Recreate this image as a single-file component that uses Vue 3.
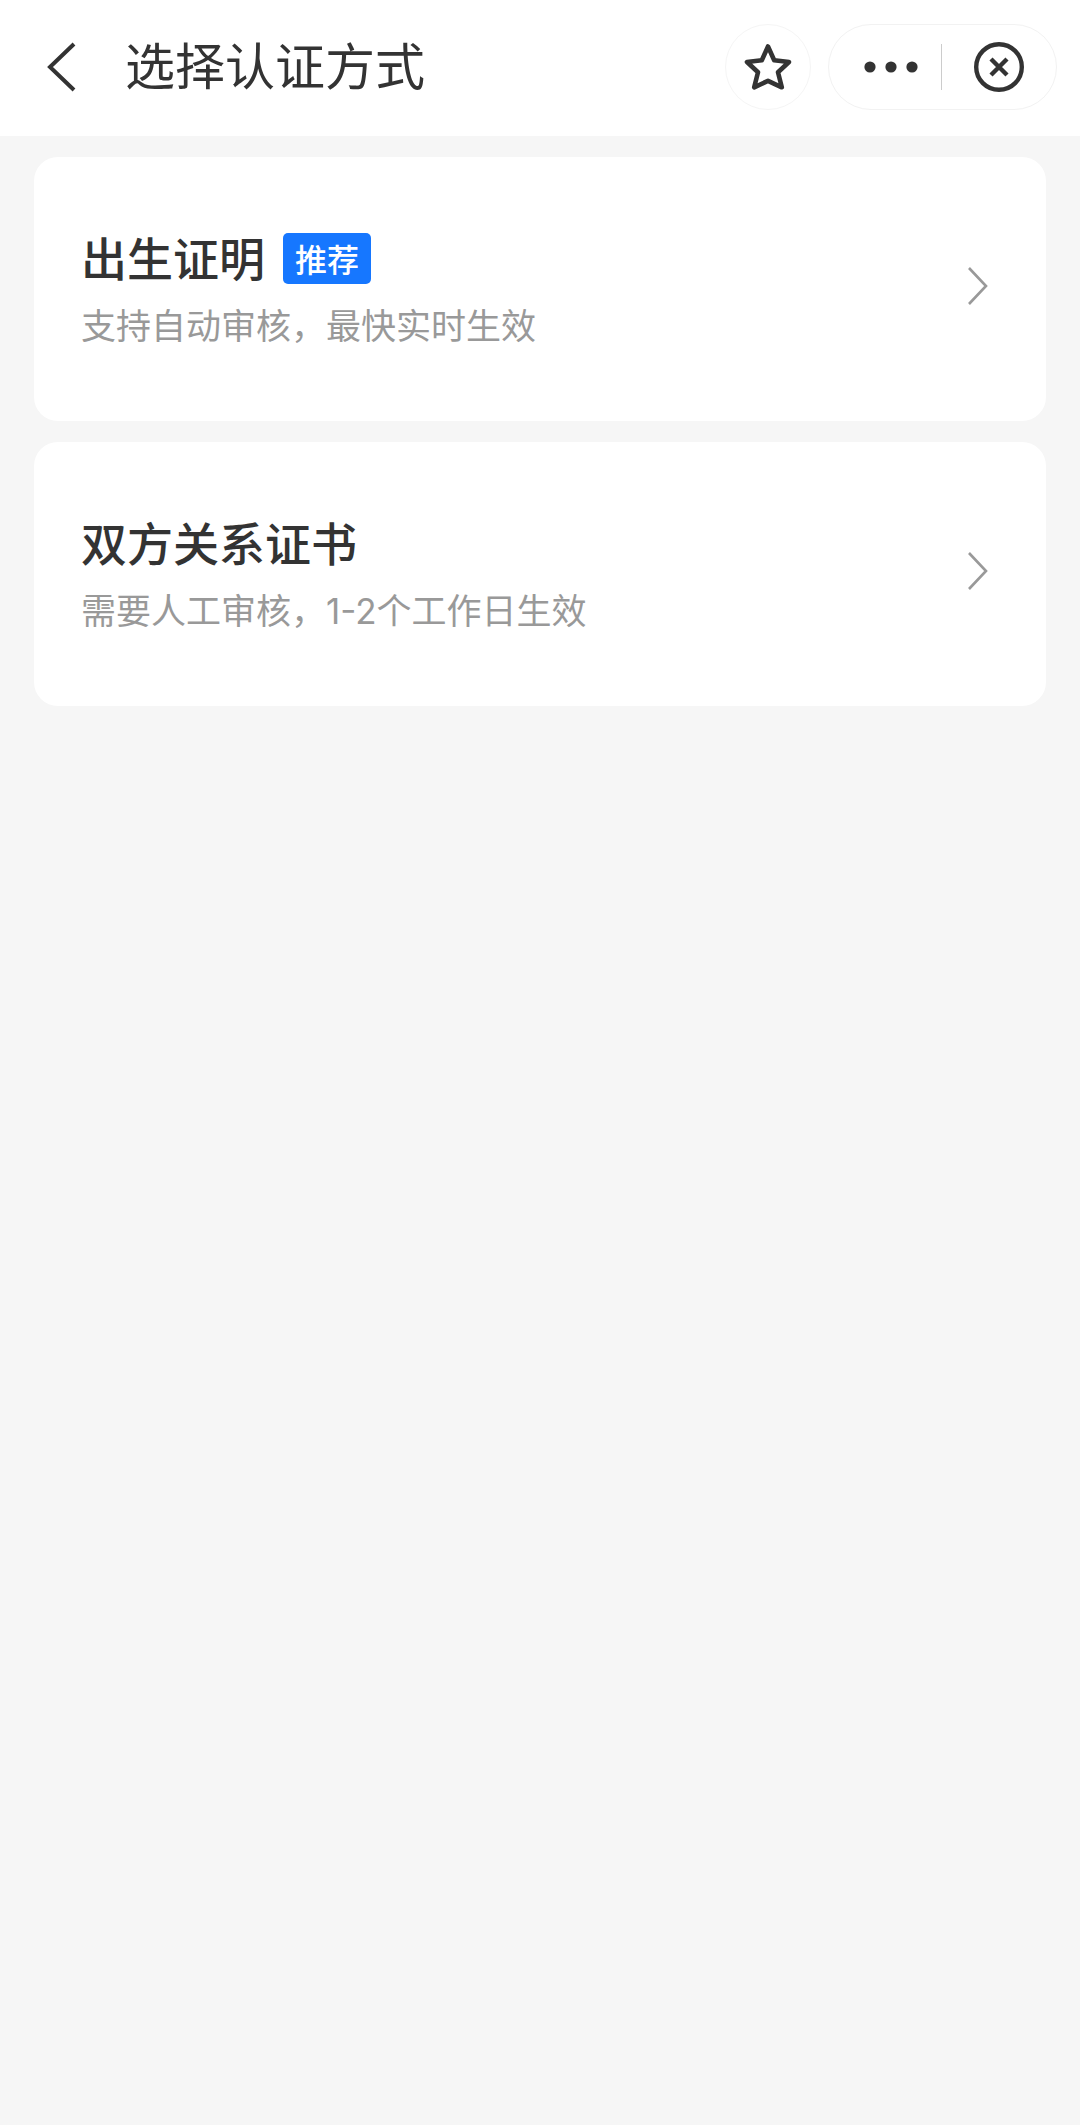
<script setup>
const methods = [
  { title: '出生证明', tag: '推荐', note: '支持自动审核，最快实时生效' },
  { title: '双方关系证书', tag: '', note: '需要人工审核，1-2个工作日生效' },
]
</script>

<template>
  <div class="page">
    <header class="bar">
      <button class="back" type="button" aria-label="返回">
        <svg width="30" height="50" viewBox="0 0 30 50">
          <path d="M28 2 L4 25 L28 48" fill="none" stroke="#333" stroke-width="4" />
        </svg>
      </button>
      <h1>选择认证方式</h1>
      <button class="favorite" type="button" aria-label="收藏">
        <svg width="50" height="50" viewBox="0 0 50 50">
          <path
            d="M25 4.5 L31.2 18.2 L46 20 L35 30.2 L38.8 45.3 L25 38.8 L11.2 45.3 L15 30.2 L4 20 L18.8 18.2 Z"
            fill="none"
            stroke="#333"
            stroke-width="4.6"
            stroke-linejoin="round"
          />
        </svg>
      </button>
      <div class="capsule">
        <button class="more" type="button" aria-label="更多">
          <svg width="54" height="12" viewBox="0 0 54 12">
            <circle cx="6" cy="6" r="5.6" fill="#333" />
            <circle cx="27" cy="6" r="5.6" fill="#333" />
            <circle cx="48" cy="6" r="5.6" fill="#333" />
          </svg>
        </button>
        <button class="close" type="button" aria-label="关闭">
          <svg width="50" height="50" viewBox="0 0 50 50">
            <circle cx="25" cy="25" r="22.8" fill="none" stroke="#333" stroke-width="4.4" />
            <path d="M17 17 L33 33 M33 17 L17 33" fill="none" stroke="#333" stroke-width="4.4" />
          </svg>
        </button>
      </div>
    </header>

    <main class="list">
      <button v-for="item in methods" :key="item.title" class="card" type="button">
        <span class="copy">
          <span class="heading">
            <span class="title">{{ item.title }}</span>
            <span v-if="item.tag" class="tag">{{ item.tag }}</span>
          </span>
          <span class="note">{{ item.note }}</span>
        </span>
        <svg class="arrow" width="20" height="38" viewBox="0 0 20 38">
          <path d="M1 1 L18 19 L1 37" fill="none" stroke="#999" stroke-width="2.6" />
        </svg>
      </button>
    </main>
  </div>
</template>

<style>
body {
  background: #f6f6f6;
}
</style>

<style scoped>
.page {
  min-height: 100vh;
  background: #f6f6f6;
  color: #333;
  font-family: "Noto Sans CJK SC", sans-serif;
}

button {
  margin: 0;
  padding: 0;
  border: 0;
  background: none;
  color: inherit;
  font: inherit;
  cursor: pointer;
}

svg {
  display: block;
  flex: none;
}

.bar {
  display: flex;
  align-items: center;
  box-sizing: border-box;
  height: 136px;
  padding: 0 23px 2px 46px;
  background: #fff;
}

h1 {
  flex: 1;
  margin: 0 0 0 49px;
  padding-bottom: 8px;
  font-size: 50px;
  line-height: 64px;
  font-weight: 400;
  white-space: nowrap;
}

.favorite {
  display: flex;
  align-items: center;
  justify-content: center;
  box-sizing: border-box;
  width: 86px;
  height: 86px;
  margin-right: 17px;
  border: 1px solid #f5f5f5;
  border-radius: 50%;
}

.capsule {
  display: flex;
  align-items: center;
  box-sizing: border-box;
  width: 229px;
  height: 86px;
  border: 1px solid #f2f2f2;
  border-radius: 43px;
}

.more,
.close {
  display: flex;
  align-items: center;
  justify-content: center;
  box-sizing: border-box;
  height: 46px;
}

.more {
  width: 113px;
  padding-left: 12px;
  border-right: 1px solid #ccc;
}

.close {
  flex: 1;
}

.list {
  display: flex;
  flex-direction: column;
  gap: 21px;
  padding: 21px 34px;
}

.card {
  display: flex;
  align-items: center;
  justify-content: space-between;
  padding: 66px 58px 73px 47px;
  border-radius: 24px;
  background: #fff;
  text-align: left;
}

.copy {
  display: flex;
  flex-direction: column;
  gap: 11px;
}

.heading {
  display: flex;
  align-items: center;
  gap: 18px;
  height: 70px;
}

.title {
  padding-bottom: 4px;
  font-size: 46px;
  line-height: 66px;
  font-weight: 500;
}

.tag {
  padding: 0 12px;
  border-radius: 5px;
  background: #1677ff;
  color: #fff;
  font-size: 32px;
  line-height: 51px;
  font-weight: 500;
}

.note {
  color: #999;
  font-family: Inter, "Noto Sans CJK SC", sans-serif;
  font-size: 35px;
  line-height: 44px;
}
</style>
